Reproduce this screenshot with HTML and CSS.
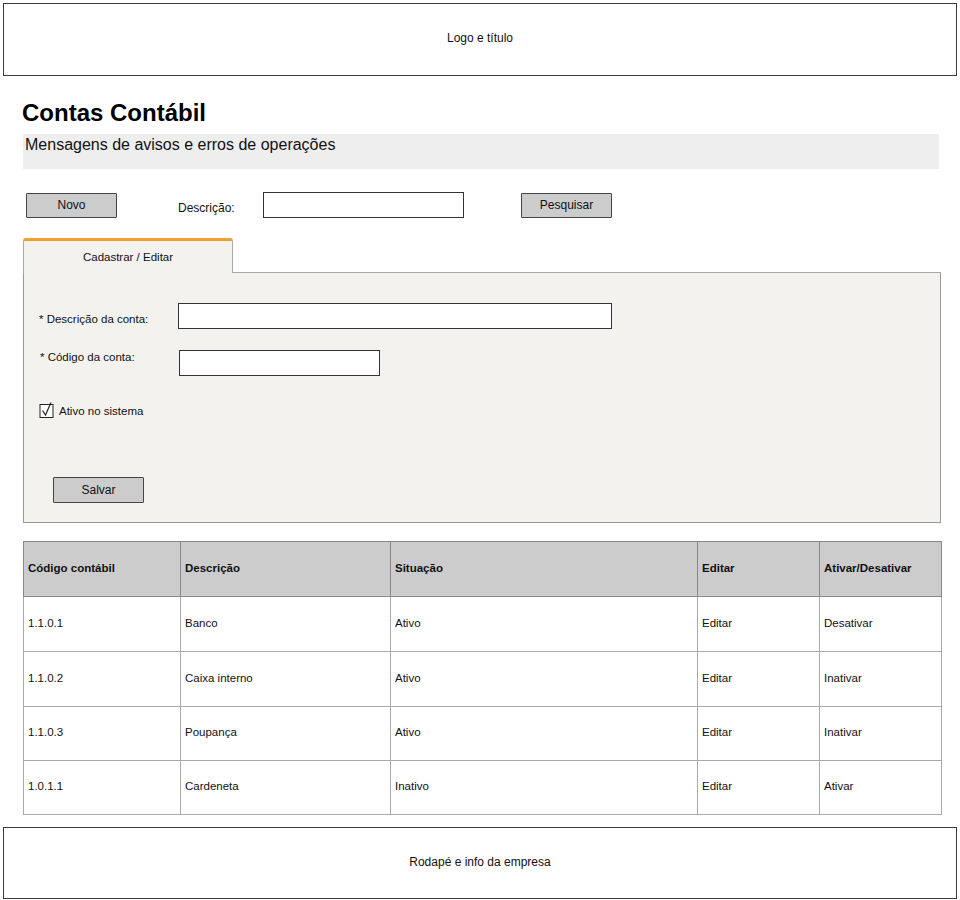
FILE: index.html
```html
<!DOCTYPE html>
<html lang="pt">
<head>
<meta charset="utf-8">
<title>Contas Contábil</title>
<link rel="stylesheet" href="styles.css">
</head>
<body>
<div class="box header">Logo e título</div>
<h1 class="title">Contas Contábil</h1>
<div class="msg">Mensagens de avisos e erros de operações</div>
<div class="toolbar">
  <button class="btn btn-novo">Novo</button>
  <span class="tb-label">Descrição:</span>
  <div class="input input-search"></div>
  <button class="btn btn-search">Pesquisar</button>
</div>
<div class="tabs">
  <div class="tabbar">
    <div class="tab">Cadastrar / Editar</div>
    <div class="tabfill"></div>
  </div>
  <div class="panel">
    <div class="form-row">
      <span class="f-label">* Descrição da conta:</span>
      <div class="input input-desc"></div>
    </div>
    <div class="form-row row2">
      <span class="f-label l2">* Código da conta:</span>
      <div class="input input-code"></div>
    </div>
    <div class="check-row">
      <svg class="cb" width="16" height="18" viewBox="0 0 16 18">
        <rect x="1" y="3.5" width="13" height="13" fill="#fff" stroke="#222" stroke-width="1"/>
        <path d="M3.5 9.5 L6.5 14 L12 1.5" fill="none" stroke="#222" stroke-width="1.2"/>
      </svg>
      <span>Ativo no sistema</span>
    </div>
    <button class="btn btn-save">Salvar</button>
  </div>
</div>
<table class="grid">
  <colgroup>
    <col class="c1"><col class="c2"><col class="c3"><col class="c4"><col class="c5">
  </colgroup>
  <thead>
    <tr><th>Código contábil</th><th>Descrição</th><th>Situação</th><th>Editar</th><th>Ativar/Desativar</th></tr>
  </thead>
  <tbody>
    <tr><td>1.1.0.1</td><td>Banco</td><td>Ativo</td><td>Editar</td><td>Desativar</td></tr>
    <tr><td>1.1.0.2</td><td>Caixa interno</td><td>Ativo</td><td>Editar</td><td>Inativar</td></tr>
    <tr class="short"><td>1.1.0.3</td><td>Poupança</td><td>Ativo</td><td>Editar</td><td>Inativar</td></tr>
    <tr class="short"><td>1.0.1.1</td><td>Cardeneta</td><td>Inativo</td><td>Editar</td><td>Ativar</td></tr>
  </tbody>
</table>
<div class="box footer">Rodapé e info da empresa</div>
</body>
</html>
```
FILE: styles.css
```css
* { box-sizing: border-box; }
body {
  margin: 0;
  width: 960px;
  background: #fff;
  color: #111;
  font-family: "Liberation Sans", Arial, sans-serif;
  font-size: 12px;
}
.box {
  margin: 3px 3px 0 3px;
  height: 73px;
  border: 1.5px solid #3a3a3a;
  display: flex;
  align-items: center;
  justify-content: center;
  font-size: 12px;
  padding-bottom: 3px;
}
.title {
  margin: 23px 0 0 22px;
  font-size: 24px;
  line-height: 28px;
  font-weight: bold;
  color: #000;
}
.msg {
  margin: 7px 0 0 23px;
  width: 916px;
  height: 35px;
  background: #eeeeee;
  padding-left: 2px;
  font-size: 16px;
  line-height: 21px;
  color: #111;
}
.toolbar {
  margin-top: 23px;
  height: 26px;
  display: flex;
  align-items: center;
  padding-left: 26px;
}
.btn {
  font-family: "Liberation Sans", Arial, sans-serif;
  font-size: 12px;
  color: #111;
  background: #cccccc;
  border: 1.5px solid #444;
  border-radius: 1px;
  width: 91px;
  height: 25px;
  padding: 0 0 1px 0;
  margin: 0;
}
.tb-label { margin-left: 61px; width: 85px; padding-top: 6px; }
.input {
  background: #fff;
  border: 1.2px solid #333;
  height: 26px;
}
.input-search { width: 201px; }
.btn-search { margin-left: 57px; }
.tabs {
  margin: 20px 0 0 23px;
  width: 918px;
}
.tabbar { display: flex; height: 35px; }
.tab {
  width: 210px;
  background: #f3f2ee;
  border-top: 3px solid #f0a030;
  border-left: 1px solid #aaa;
  border-right: 1px solid #aaa;
  border-radius: 3px 3px 0 0;
  text-align: center;
  padding-top: 10px;
  font-size: 11.5px;
}
.tabfill { flex: 1; border-bottom: 1px solid #aaa; }
.panel {
  height: 250px;
  background: #f3f2ee;
  border: 1px solid #999;
  border-top: none;
  padding: 30px 0 0 15px;
}
.form-row { display: flex; align-items: flex-start; }
.f-label { width: 139px; padding-top: 10px; font-size: 11.5px; }
.l2 { padding-left: 1px; padding-top: 1px; }
.row2 { margin-top: 21px; }
.input-desc { width: 434px; }
.input-code { width: 201px; margin-left: 1px; }
.check-row {
  margin-top: 25px;
  display: flex;
  align-items: flex-end;
  gap: 4px;
  font-size: 11.5px;
}
.check-row span { padding-bottom: 2px; }
.btn-save { margin: 58px 0 0 14px; height: 26px; }
.grid {
  margin: 18px 0 0 23px;
  width: 918px;
  border-collapse: collapse;
  table-layout: fixed;
  border: 1px solid #999;
}
.c1 { width: 157px; }
.c2 { width: 210px; }
.c3 { width: 307px; }
.c4 { width: 122px; }
.c5 { width: 122px; }
.grid th, .grid td {
  border: 1px solid #aaa;
  text-align: left;
  padding: 0 0 0 4px;
  font-size: 11.5px;
  vertical-align: middle;
}
.grid th {
  background: #cccccc;
  height: 55px;
  font-weight: bold;
  border-color: #888;
  padding-bottom: 3px;
}
.grid td { height: 55px; padding-bottom: 3px; }
.grid tr.short td { height: 54px; }
.footer { margin-top: 12px; height: 72px; }
```
